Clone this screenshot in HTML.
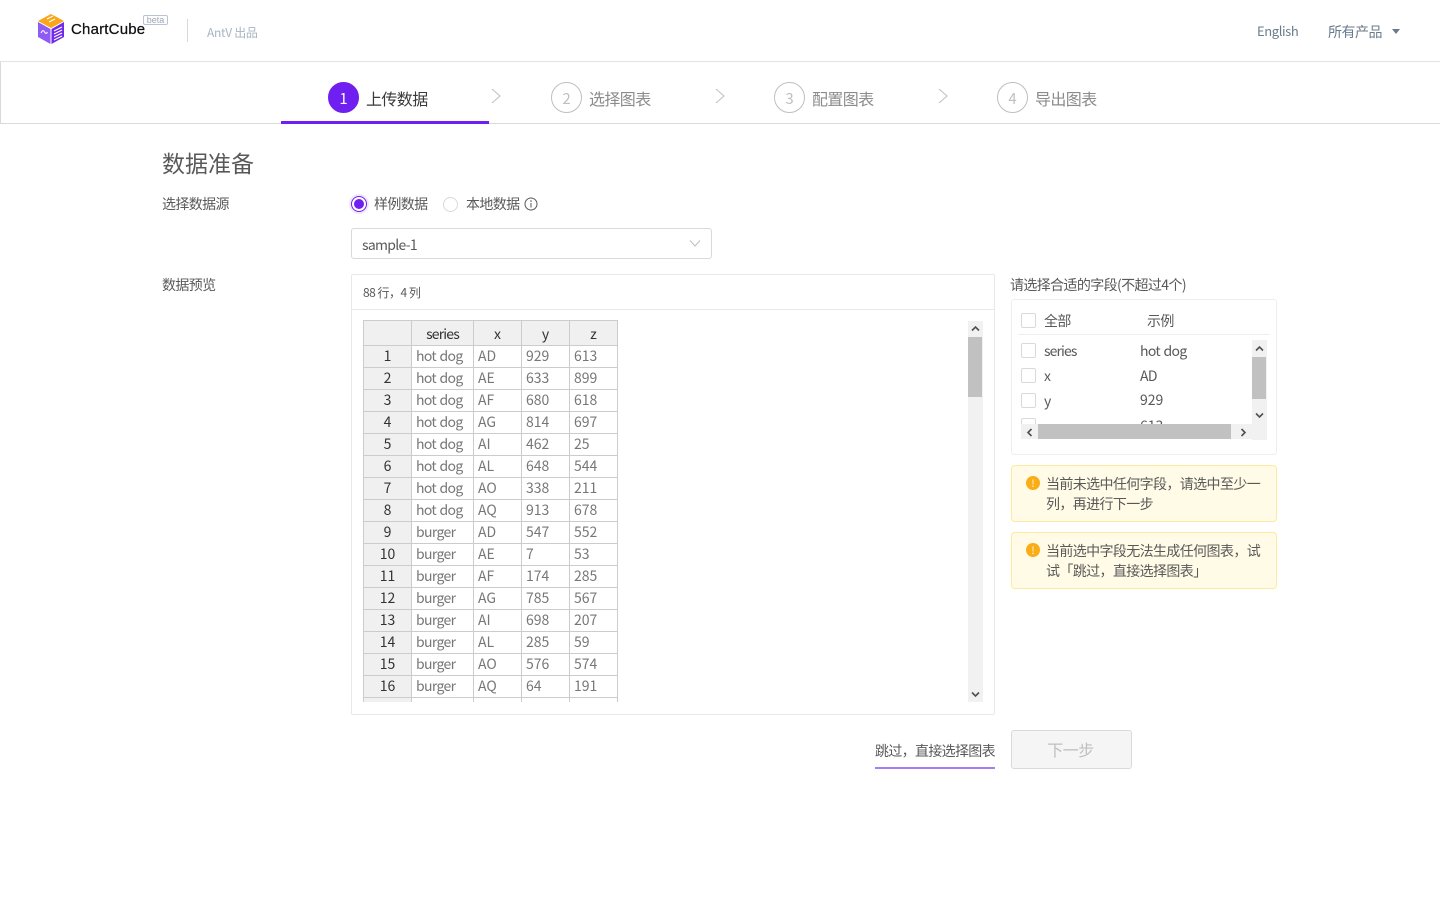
<!DOCTYPE html>
<html lang="zh-CN"><head><meta charset="utf-8"><title>ChartCube</title>
<style>
*{box-sizing:border-box}
html,body{margin:0;padding:0;width:1440px;height:907px;overflow:hidden;background:#fff}
body{position:relative;font-family:"Noto Sans CJK SC","Liberation Sans",sans-serif;font-weight:400;color:#595959;font-size:14px}
.a{position:absolute;white-space:nowrap;line-height:20px;letter-spacing:-.62px}
.box{position:absolute}
.num{position:absolute;width:31px;height:31px;border-radius:50%;border:1px solid #bfbfbf;color:#bfbfbf;text-align:center;line-height:31px;font-size:15px;top:82px}
.st{position:absolute;top:87px;font-size:16px;line-height:22px;color:#8c8c8c;white-space:nowrap;letter-spacing:-.6px}
table{border-collapse:collapse;table-layout:fixed;width:254px;font-size:14px;color:#777}
td,th{border:1px solid #ccc;height:22px;padding:0 4px 1px;line-height:18px;font-weight:400;overflow:hidden;white-space:nowrap}
th{background:#f0f0f0;color:#333;text-align:center}
td:nth-child(2){letter-spacing:-.65px;word-spacing:1px}
tr:first-child th{height:25px;padding:2px 4px 0}
.cb{position:absolute;width:15px;height:15px;border:1px solid #d9d9d9;border-radius:2px;background:#fff}
.warn{position:absolute;left:1011px;width:266px;background:#fffbe6;border:1.5px solid #ffe8a0;border-radius:4px}
.warn .t{position:absolute;left:34px;top:7.5px;width:217px;line-height:20px;font-size:14px;color:#595959;letter-spacing:-.62px}
.warn .i{position:absolute;left:14px;top:10px;width:14px;height:14px;border-radius:50%;background:#faad14;color:#fff;font-size:10px;line-height:14px;text-align:center}
</style></head><body>

<!-- logo -->
<svg class="box" style="left:37px;top:13px" width="28" height="32" viewBox="0 0 28 32">
<path d="M14 1 27 8 14 15 1 8Z" fill="#faa61a"/>
<path d="M1 9 13.500 16V31L1 24Z" fill="#8e5cf5"/>
<path d="M14.500 16 27 9V24L14.500 31Z" fill="#6f2ce8"/>
<path d="M10 6 16 3M12 9 18 6" stroke="#fff" stroke-width="1"/>
<path d="M4 20c1.500-3 2.500-3 3.500-1s2 2 3 0" stroke="#fff" stroke-width="1" fill="none"/>
<path d="M17 18 25 14M17 21 25 17M17 24 25 20M17 27 25 23" stroke="#fff" stroke-width="1"/>
</svg>
<div class="a" style="left:71px;top:20px;font-family:'Liberation Sans',sans-serif;font-size:15px;color:#111;letter-spacing:.2px;-webkit-text-stroke:.25px #111">ChartCube</div>
<div class="box" style="left:143px;top:15px;width:25px;height:10px;border:1px solid #b8c4d3;border-radius:2px;color:#9aa8ba;font-size:9px;line-height:8px;text-align:center;font-family:'Liberation Sans',sans-serif">beta</div>
<div class="box" style="left:187px;top:19px;width:1px;height:23px;background:#d5d9de"></div>
<div class="a" style="left:207px;top:23px;font-size:12px;color:#a8b4c4;letter-spacing:-.3px">AntV 出品</div>
<div class="a" style="left:1257px;top:21px;font-size:13px;color:#697b8c;letter-spacing:-.4px">English</div>
<div class="a" style="left:1328px;top:22px;font-size:14px;color:#697b8c;letter-spacing:-.5px">所有产品</div>
<div class="box" style="left:1392px;top:29px;width:0;height:0;border-left:4.500px solid transparent;border-right:4.500px solid transparent;border-top:5px solid #697b8c"></div>

<!-- steps -->
<div class="box" style="left:0;top:61px;width:1440px;height:63px;border:1px solid #e3e3e3;border-bottom-color:#d9d9d9;border-right:0;border-left-color:#d9d9d9"></div>
<div class="box" style="left:281px;top:121px;width:208px;height:3px;background:#6f1ff0"></div>
<div class="num" style="left:328px;background:#6f1ff0;border-color:#6f1ff0;color:#fff">1</div>
<div class="st" style="left:366px;color:#3a3a3a">上传数据</div>
<div class="num" style="left:551px">2</div>
<div class="st" style="left:589px">选择图表</div>
<div class="num" style="left:774px">3</div>
<div class="st" style="left:812px">配置图表</div>
<div class="num" style="left:997px">4</div>
<div class="st" style="left:1035px">导出图表</div>
<svg class="box" style="left:490px;top:87px" width="12" height="18"><path d="M2 2 10 9 2 16" fill="none" stroke="#bfbfbf"/></svg>
<svg class="box" style="left:714px;top:87px" width="12" height="18"><path d="M2 2 10 9 2 16" fill="none" stroke="#bfbfbf"/></svg>
<svg class="box" style="left:937px;top:87px" width="12" height="18"><path d="M2 2 10 9 2 16" fill="none" stroke="#bfbfbf"/></svg>

<!-- form -->
<div class="a" style="left:162px;top:147px;font-size:23px;line-height:30px;color:#595959;letter-spacing:0">数据准备</div>
<div class="a" style="left:162px;top:194px">选择数据源</div>
<div class="a" style="left:162px;top:275px">数据预览</div>

<div class="box" style="left:349px;top:194px;width:20px;height:20px;border-radius:50%;background:#f0e9fe"></div>
<div class="box" style="left:351px;top:196px;width:16px;height:16px;border-radius:50%;border:1px solid #6f1ff0;background:#fff"></div>
<div class="box" style="left:354px;top:199px;width:10px;height:10px;border-radius:50%;background:#6f1ff0"></div>
<div class="a" style="left:374px;top:194px">样例数据</div>
<div class="box" style="left:443px;top:197px;width:15px;height:15px;border-radius:50%;border:1px solid #d9d9d9"></div>
<div class="a" style="left:466px;top:194px">本地数据</div>
<svg class="box" style="left:524px;top:197px" width="14" height="14" viewBox="0 0 14 14"><circle cx="7" cy="7" r="6" fill="none" stroke="#595959"/><path d="M7 6v4.500" stroke="#595959"/><circle cx="7" cy="4" r=".8" fill="#595959"/></svg>

<div class="box" style="left:351px;top:228px;width:361px;height:31px;border:1px solid #d9d9d9;border-radius:3px"></div>
<div class="a" style="left:362px;top:235px;color:#595959;letter-spacing:-.7px">sample-1</div>
<svg class="box" style="left:689px;top:239px" width="12" height="9"><path d="M1 1.500 6 7 11 1.500" fill="none" stroke="#bfbfbf"/></svg>

<!-- preview panel -->
<div class="box" style="left:351px;top:274px;width:644px;height:441px;border:1px solid #e8e8e8;border-radius:2px"></div>
<div class="box" style="left:352px;top:309px;width:642px;height:1px;background:#e8e8e8"></div>
<div class="a" style="left:363px;top:283px;font-size:12px;letter-spacing:-.5px">88 行，4 列</div>

<div class="box" style="left:363px;top:320px;width:256px;height:382px;overflow:hidden">
<table>
<colgroup><col style="width:48px"><col style="width:62px"><col style="width:48px"><col style="width:48px"><col style="width:48px"></colgroup>
<tr><th></th><th style="letter-spacing:-.85px">series</th><th>x</th><th>y</th><th>z</th></tr>
<tr><th>1</th><td>hot dog</td><td>AD</td><td>929</td><td>613</td></tr>
<tr><th>2</th><td>hot dog</td><td>AE</td><td>633</td><td>899</td></tr>
<tr><th>3</th><td>hot dog</td><td>AF</td><td>680</td><td>618</td></tr>
<tr><th>4</th><td>hot dog</td><td>AG</td><td>814</td><td>697</td></tr>
<tr><th>5</th><td>hot dog</td><td>AI</td><td>462</td><td>25</td></tr>
<tr><th>6</th><td>hot dog</td><td>AL</td><td>648</td><td>544</td></tr>
<tr><th>7</th><td>hot dog</td><td>AO</td><td>338</td><td>211</td></tr>
<tr><th>8</th><td>hot dog</td><td>AQ</td><td>913</td><td>678</td></tr>
<tr><th>9</th><td>burger</td><td>AD</td><td>547</td><td>552</td></tr>
<tr><th>10</th><td>burger</td><td>AE</td><td>7</td><td>53</td></tr>
<tr><th>11</th><td>burger</td><td>AF</td><td>174</td><td>285</td></tr>
<tr><th>12</th><td>burger</td><td>AG</td><td>785</td><td>567</td></tr>
<tr><th>13</th><td>burger</td><td>AI</td><td>698</td><td>207</td></tr>
<tr><th>14</th><td>burger</td><td>AL</td><td>285</td><td>59</td></tr>
<tr><th>15</th><td>burger</td><td>AO</td><td>576</td><td>574</td></tr>
<tr><th>16</th><td>burger</td><td>AQ</td><td>64</td><td>191</td></tr>
<tr><th>&nbsp;</th><td>&nbsp;</td><td>&nbsp;</td><td>&nbsp;</td><td>&nbsp;</td></tr>
</table>
</div>

<!-- main scrollbar -->
<div class="box" style="left:968px;top:321px;width:15px;height:381px;background:#f1f1f1"></div>
<div class="box" style="left:968px;top:337px;width:14px;height:60px;background:#c1c1c1"></div>
<svg class="box" style="left:971px;top:325px" width="9" height="7"><path d="M1 5.500 4.500 2 8 5.500" fill="none" stroke="#505050" stroke-width="1.600"/></svg>
<svg class="box" style="left:971px;top:691px" width="9" height="7"><path d="M1 1.500 4.500 5 8 1.500" fill="none" stroke="#505050" stroke-width="1.600"/></svg>

<!-- field panel -->
<div class="a" style="left:1010px;top:275px">请选择合适的字段(不超过4个)</div>
<div class="box" style="left:1011px;top:299px;width:266px;height:156px;border:1px solid #eee;border-radius:3px"></div>
<div class="box" style="left:1018px;top:334px;width:252px;height:1px;background:#eee"></div>
<div class="cb" style="left:1021px;top:313px"></div>
<div class="a" style="left:1044px;top:311px">全部</div>
<div class="a" style="left:1147px;top:311px">示例</div>
<div class="cb" style="left:1021px;top:343px"></div>
<div class="a" style="left:1044px;top:341px;letter-spacing:-.9px">series</div>
<div class="a" style="left:1140px;top:341px;letter-spacing:-.65px;word-spacing:1px">hot dog</div>
<div class="cb" style="left:1021px;top:368px"></div>
<div class="a" style="left:1044px;top:366px">x</div>
<div class="a" style="left:1140px;top:366px">AD</div>
<div class="cb" style="left:1021px;top:393px"></div>
<div class="a" style="left:1044px;top:391px">y</div>
<div class="a" style="left:1140px;top:390px;letter-spacing:0">929</div>
<div class="box" style="left:1021px;top:410px;width:240px;height:14px;overflow:hidden">
<div class="cb" style="left:0;top:8px"></div>
<div class="a" style="left:119px;top:6px;letter-spacing:0">613</div>
</div>
<div class="box" style="left:1021px;top:424px;width:231px;height:15px;background:#f1f1f1"></div>
<div class="box" style="left:1038px;top:424px;width:193px;height:15px;background:#c1c1c1"></div>
<div class="box" style="left:1252px;top:340px;width:15px;height:100px;background:#f1f1f1"></div>
<div class="box" style="left:1252px;top:357px;width:14px;height:42px;background:#c1c1c1"></div>
<svg class="box" style="left:1255px;top:345px" width="9" height="7"><path d="M1 5.500 4.500 2 8 5.500" fill="none" stroke="#505050" stroke-width="1.600"/></svg>
<svg class="box" style="left:1255px;top:412px" width="9" height="7"><path d="M1 1.500 4.500 5 8 1.500" fill="none" stroke="#505050" stroke-width="1.600"/></svg>
<svg class="box" style="left:1026px;top:428px" width="7" height="9"><path d="M5.500 1 2 4.500 5.500 8" fill="none" stroke="#505050" stroke-width="1.600"/></svg>
<svg class="box" style="left:1240px;top:428px" width="7" height="9"><path d="M1.500 1 5 4.500 1.500 8" fill="none" stroke="#505050" stroke-width="1.600"/></svg>

<!-- warnings -->
<div class="warn" style="top:465px;height:57px"><div class="i">!</div><div class="t">当前未选中任何字段，请选中至少一列，再进行下一步</div></div>
<div class="warn" style="top:532px;height:57px"><div class="i">!</div><div class="t">当前选中字段无法生成任何图表，试试「跳过，直接选择图表」</div></div>

<!-- actions -->
<div class="a" style="left:875px;top:741px;letter-spacing:-.67px">跳过，直接选择图表</div>
<div class="box" style="left:875px;top:767px;width:120px;height:2px;background:#a67cf5"></div>
<div class="box" style="left:1011px;top:730px;width:121px;height:39px;background:#f5f5f5;border:1px solid #d9d9d9;border-radius:3px;color:#bfbfbf;font-size:16px;text-align:center;line-height:37px;letter-spacing:-.5px;padding-right:2px">下一步</div>

</body></html>
